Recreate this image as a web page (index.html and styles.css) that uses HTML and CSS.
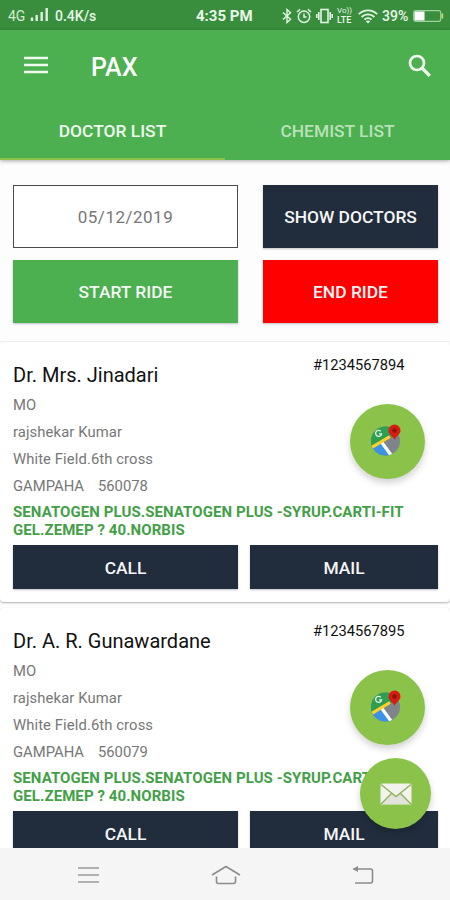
FILE: index.html
```html
<!DOCTYPE html>
<html lang="en">
<head>
    <meta charset="UTF-8">
    <meta name="viewport" content="width=device-width, initial-scale=1.0">
    <title>PAX</title>
    <link rel="stylesheet" href="styles.css">
</head>
<body>
    <!-- shared map icon -->
    <svg class="defs" width="0" height="0">
        <symbol id="map-icon" viewBox="0 0 32 32">
            <clipPath id="disc"><circle cx="15.500" cy="17" r="14.500"/></clipPath>
            <g clip-path="url(#disc)">
                <rect width="32" height="32" fill="#7f838c"/>
                <path d="M0 0H26V10L0 25Z" fill="#2f9e50"/>
                <path d="M2 25L13 17L23 32H2Z" fill="#3b93e6"/>
                <path d="M11.500 18L21 31" stroke="#fff" stroke-width="3.200"/>
                <path d="M0 24.500L20 12.500" stroke="#fdd02b" stroke-width="3.200"/>
            </g>
            <path d="M10.800 7.300A3 3 0 1 0 11.600 9.800H9" fill="none" stroke="#e4f5e7" stroke-width="1.300"/>
            <path d="M24.500 16C23.500 12.500 18.500 10.500 18.500 6.500a6 6 0 0 1 12 0C30.500 10.500 25.500 12.500 24.500 16Z" fill="#d81b12"/>
            <circle cx="24.500" cy="6.500" r="2.200" fill="#8e0f0c"/>
        </symbol>
    </svg>

    <div class="screen">
        <div class="status-bar">
            <span class="network">4G</span>
            <svg class="signal" width="19" height="15" viewBox="0 0 19 15">
                <path d="M2 14V10.500M6.700 14V8M11.700 14V5M16.700 14V1" stroke="#dff0df" stroke-width="2.400"/>
            </svg>
            <span class="speed">0.4K/s</span>
            <span class="clock">4:35 PM</span>
            <div class="status-icons">
                <svg width="10" height="16" viewBox="0 0 10 16" fill="none" stroke="#e4f4e4" stroke-width="1.400">
                    <path d="M1 4.500L8.500 11.300L5 14.500V1.500L8.500 4.700L1 11.500"/>
                </svg>
                <svg width="16" height="16" viewBox="0 0 16 16" fill="none" stroke="#e4f4e4" stroke-width="1.500">
                    <circle cx="8" cy="8.700" r="5.700"/>
                    <path d="M8 5.500V9H10.500M1 4L4 1.200M15 4L12 1.200"/>
                </svg>
                <svg width="17" height="16" viewBox="0 0 17 16" fill="none" stroke="#e4f4e4" stroke-width="1.600">
                    <rect x="5" y="1.500" width="7" height="13"/>
                    <path d="M2.800 4V12M14.200 4V12M.8 6V10M16.200 6V10"/>
                </svg>
                <span class="volte"><span>Vo))</span><b>LTE</b></span>
                <svg width="20" height="15" viewBox="0 0 20 15" fill="none" stroke="#e4f4e4" stroke-width="1.800">
                    <path d="M.8 5.200C6 .2 14 .2 19.200 5.200M3.600 8C7.200 4.500 12.800 4.500 16.400 8M6.400 10.700C8.500 8.700 11.500 8.700 13.600 10.700"/>
                    <path d="M10 14.500L7.800 12.300C9 11.200 11 11.200 12.200 12.300Z" fill="#e4f4e4" stroke="none"/>
                </svg>
                <span class="percent">39%</span>
                <svg width="31" height="12" viewBox="0 0 31 12">
                    <rect x=".7" y=".7" width="27" height="10.600" rx="2" fill="none" stroke="#9fd0a0" stroke-width="1.200"/>
                    <rect x="1.500" y="1.500" width="10" height="9" fill="#fff"/>
                    <path d="M29.300 3.500V8.500" stroke="#b9e07c" stroke-width="1.800"/>
                </svg>
            </div>
        </div>

        <header class="app-bar">
            <div class="toolbar">
                <svg class="menu" width="24" height="18" viewBox="0 0 24 18">
                    <path d="M0 2H24M0 9H24M0 16H24" stroke="#effaef" stroke-width="2.400"/>
                </svg>
                <h1>PAX</h1>
                <svg class="search" width="24" height="24" viewBox="0 0 24 24" fill="none" stroke="#f0fbf0">
                    <circle cx="9" cy="9" r="7" stroke-width="2.700"/>
                    <path d="M14 14L21.800 21.800" stroke-width="3.300"/>
                </svg>
            </div>
            <nav class="tabs">
                <a class="tab active">DOCTOR LIST</a>
                <a class="tab">CHEMIST LIST</a>
            </nav>
        </header>

        <main class="content">
            <div class="controls">
                <div class="date">05/12/2019</div>
                <button class="btn dark">SHOW DOCTORS</button>
                <button class="btn start">START RIDE</button>
                <button class="btn end">END RIDE</button>
            </div>

            <section class="card">
                <div class="card-top">
                    <div class="info">
                        <h2>Dr. Mrs. Jinadari</h2>
                        <p>MO</p>
                        <p>rajshekar Kumar</p>
                        <p>White Field.6th cross</p>
                        <p class="city"><span>GAMPAHA</span><span>560078</span></p>
                    </div>
                    <div class="side">
                        <div class="code">#1234567894</div>
                        <div class="fab"><svg width="32" height="32"><use href="#map-icon"/></svg></div>
                    </div>
                </div>
                <div class="products">SENATOGEN PLUS.SENATOGEN PLUS -SYRUP.CARTI-FIT<br>GEL.ZEMEP ? 40.NORBIS</div>
                <div class="actions">
                    <button class="btn dark">CALL</button>
                    <button class="btn dark">MAIL</button>
                </div>
            </section>

            <section class="card">
                <div class="card-top">
                    <div class="info">
                        <h2>Dr. A. R. Gunawardane</h2>
                        <p>MO</p>
                        <p>rajshekar Kumar</p>
                        <p>White Field.6th cross</p>
                        <p class="city"><span>GAMPAHA</span><span>560079</span></p>
                    </div>
                    <div class="side">
                        <div class="code">#1234567895</div>
                        <div class="fab"><svg width="32" height="32"><use href="#map-icon"/></svg></div>
                    </div>
                </div>
                <div class="products">SENATOGEN PLUS.SENATOGEN PLUS -SYRUP.CARTI-FIT<br>GEL.ZEMEP ? 40.NORBIS</div>
                <div class="actions">
                    <button class="btn dark">CALL</button>
                    <button class="btn dark">MAIL</button>
                </div>
            </section>
        </main>

        <div class="fab mail-fab">
            <svg width="32" height="22" viewBox="0 0 32 22">
                <rect x=".5" y=".5" width="31" height="21" rx="1.500" fill="#f3f3ee"/>
                <path d="M1 21L12 10.500L16 13.500L20 10.500L31 21Z" fill="#e2e3dc"/>
                <path d="M1 1.500L16 13.500L31 1.500M1 21L11.500 10.500M31 21L20.500 10.500" fill="none" stroke="#8fb25c" stroke-width="1.400"/>
            </svg>
        </div>

        <footer class="nav-bar">
            <svg width="22" height="18" viewBox="0 0 22 18">
                <path d="M0 2H21M0 9H21M0 16H21" stroke="#999" stroke-width="1.700"/>
            </svg>
            <svg width="30" height="20" viewBox="0 0 30 20" fill="none" stroke="#8c8c8c" stroke-width="1.600">
                <path d="M1 10L15 1.500L29 10M5.500 11.500V16.500Q5.500 18.500 7.500 18.500H22.500Q24.500 18.500 24.500 16.500V11.500"/>
            </svg>
            <svg width="22" height="18" viewBox="0 0 22 18" fill="none" stroke="#8c8c8c" stroke-width="1.600">
                <path d="M1.500 3H18.500Q20.500 3 20.500 5V15Q20.500 17 18.500 17H3"/>
                <path d="M6 0L.5 3L6 6Z" fill="#8c8c8c" stroke="none"/>
            </svg>
        </footer>
    </div>
</body>
</html>
```
FILE: styles.css
```css
* {
    box-sizing: border-box;
}
body {
    margin: 0;
    font-family: Roboto, "Liberation Sans", sans-serif;
    background: #fdfdfd;
}
svg {
    display: block;
    flex-shrink: 0;
}
.defs {
    position: absolute;
}
.screen {
    width: 450px;
    height: 900px;
    display: flex;
    flex-direction: column;
    position: relative;
    overflow: hidden;
}

/* status bar */
.status-bar {
    height: 30px;
    flex-shrink: 0;
    background: #388e3c;
    color: #eaf6ea;
    display: flex;
    align-items: center;
    padding: 2px 6px 0 8px;
    font-size: 14px;
}
.network {
    width: 22px;
    flex-shrink: 0;
    color: #d3ead3;
}
.signal {
    margin-top: -3px;
}
.speed {
    margin-left: 6px;
    width: 141px;
    flex-shrink: 0;
    font-weight: 500;
}
.clock {
    font-size: 15px;
    font-weight: 700;
    white-space: nowrap;
}
.status-icons {
    margin-left: auto;
    display: flex;
    align-items: center;
    gap: 4px;
}
.volte {
    display: flex;
    flex-direction: column;
    font-size: 8px;
    line-height: 9px;
    width: 17px;
    margin-top: -2px;
}
.volte b {
    font-size: 9px;
    font-weight: 500;
    line-height: 10px;
}
.percent {
    font-weight: 500;
    width: 27px;
}

/* app bar */
.app-bar {
    height: 130px;
    flex-shrink: 0;
    background: #4caf50;
    color: #fff;
    box-shadow: 0 1px 4px rgba(0, 0, 0, 0.35);
    z-index: 1;
}
.toolbar {
    height: 72px;
    display: flex;
    align-items: center;
    padding: 0 18px 0 24px;
}
.menu {
    margin-top: -2px;
}
.toolbar h1 {
    margin: 2px 0 0 43px;
    font-size: 25px;
    font-weight: 500;
}
.search {
    margin: -1px 0 0 auto;
}
.tabs {
    display: flex;
    height: 58px;
}
.tab {
    flex: 1;
    display: flex;
    align-items: center;
    justify-content: center;
    padding-top: 2px;
    font-size: 17.400px;
    font-weight: 500;
    color: #b9e2ba;
    border-bottom: 2px solid transparent;
}
.tab.active {
    color: #effaef;
    border-bottom-color: #8bc34a;
}

/* content */
.content {
    flex: 1;
    min-height: 0;
    overflow: hidden;
}
.controls {
    display: grid;
    grid-template-columns: 225px 175px;
    grid-template-rows: 63px 63px;
    gap: 12px 25px;
    padding: 25px 12px 18px 13px;
    border-bottom: 1px solid #f3f3f3;
}
.date {
    display: flex;
    align-items: center;
    justify-content: center;
    background: #fff;
    border: 1px solid #4a4a4a;
    color: #777;
    font-size: 17px;
    letter-spacing: 0.5px;
    padding-top: 1px;
}
.btn {
    border: none;
    padding: 1px 0 0;
    color: #f5f5f5;
    font-family: inherit;
    font-size: 17.400px;
    font-weight: 500;
    box-shadow: 0 1px 2px rgba(0, 0, 0, 0.25);
}
.btn.dark {
    background: #212d3d;
}
.btn.start {
    background: #4caf50;
}
.btn.end {
    background: #ff0000;
}

/* doctor cards */
.card {
    height: 260px;
    margin-bottom: 6px;
    padding: 13px 12px 13px 13px;
    background: #fff;
    border-radius: 4px;
    box-shadow: 0 1px 2px rgba(0, 0, 0, 0.3);
}
.card-top {
    display: flex;
    height: 148px;
}
.info {
    width: 300px;
    padding-top: 5px;
}
.info h2 {
    margin: 0 0 2px;
    font-size: 20px;
    font-weight: 400;
    line-height: 30px;
    color: #111;
}
.info p {
    margin: 0;
    font-size: 14.800px;
    letter-spacing: 0.1px;
    line-height: 27px;
    color: #777;
}
.info .city {
    display: flex;
    gap: 14px;
    letter-spacing: 0;
}
.code {
    font-size: 14.700px;
    line-height: 20px;
    color: #111;
}
.fab {
    width: 75px;
    height: 75px;
    margin: 29px 0 0 37px;
    display: flex;
    align-items: center;
    justify-content: center;
    border-radius: 50%;
    background: #8bc34a;
    box-shadow: 0 4px 7px rgba(0, 0, 0, 0.18);
}
.side .fab svg {
    margin: -4px 4px 0 0;
}
.products {
    font-size: 15px;
    font-weight: 700;
    letter-spacing: 0.08px;
    line-height: 18px;
    color: #43a047;
    white-space: nowrap;
}
.actions {
    display: grid;
    grid-template-columns: 225px 188px;
    gap: 12px;
    height: 44px;
    margin-top: 6px;
}
.actions .btn {
    padding-top: 2px;
}
.mail-fab {
    position: absolute;
    right: 19px;
    bottom: 71px;
    width: 71px;
    height: 71px;
    margin: 0;
}

/* system navigation */
.nav-bar {
    height: 52px;
    flex-shrink: 0;
    display: flex;
    align-items: center;
    justify-content: space-between;
    padding: 1px 76px 0 78px;
    background: #f5f5f5;
    z-index: 1;
}
```
